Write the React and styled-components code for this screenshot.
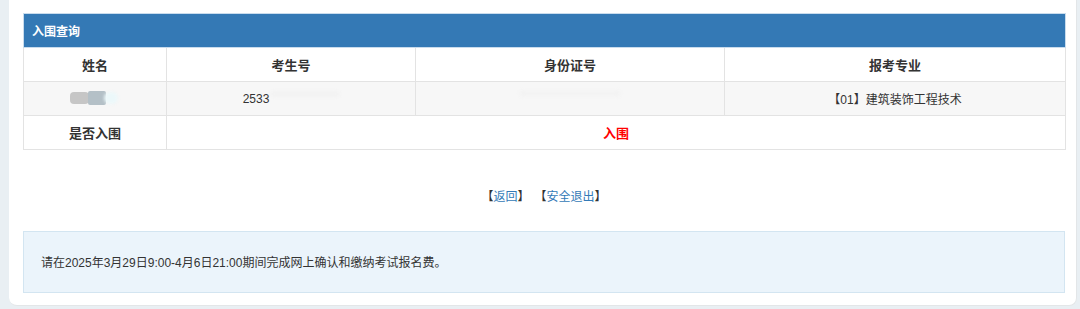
import React from 'react';
import styled, { createGlobalStyle } from 'styled-components';

const GlobalStyle = createGlobalStyle`
  html, body {
    margin: 0;
    padding: 0;
    background: #e9eff3;
  }
  body {
    font-family: "Liberation Sans", "Noto Sans CJK SC", sans-serif;
    color: #333;
  }
`;

const Page = styled.div`
  width: 1080px;
  height: 309px;
  box-sizing: border-box;
  padding: 0 3px 4px 9px;
  overflow: hidden;
`;

const Card = styled.div`
  background: #fff;
  border-right: 1px solid #e3e6e8;
  border-bottom: 1px solid #e3e6e8;
  border-radius: 0 0 8px 8px;
  padding: 13px 11px 12px 14px;
`;

const Panel = styled.table`
  width: 1042px;
  border-collapse: collapse;
  table-layout: fixed;
  font-size: 13px;
`;

const Caption = styled.th`
  background: #3479b5;
  color: #fff;
  text-align: left;
  font-size: 12px;
  font-weight: bold;
  height: 33px;
  padding: 0 8px;
  border: 1px solid #c9dced;
`;

const Cell = styled.td`
  height: 33px;
  padding: 0 8px;
  border: 1px solid #e3e3e3;
  text-align: center;
  font-weight: ${(p) => (p.$head ? 'bold' : 'normal')};
  color: ${(p) => (p.$red ? '#ff0000' : '#333')};
  font-size: ${(p) => (p.$head ? '13px' : '12px')};
`;

const Row = styled.tr`
  background: ${(p) => (p.$shade ? '#f7f7f7' : '#fff')};
`;

const Smudge = styled.span`
  display: inline-block;
  vertical-align: middle;
  width: ${(p) => p.$w}px;
  height: ${(p) => p.$h}px;
  border-radius: ${(p) => p.$r ?? 6}px;
  background: ${(p) => p.$bg};
  filter: blur(${(p) => p.$blur}px);
`;

const NameBlur = styled.span`
  display: inline-flex;
  align-items: center;
  margin-left: -2px;
`;

const Links = styled.div`
  margin: 38px 0 25px;
  line-height: 18px;
  font-size: 12px;
  text-align: center;
  color: #333;
`;

const Gap = styled.span`
  display: inline-block;
  width: 5px;
`;

const Link = styled.a`
  color: #337ab7;
  text-decoration: none;
`;

const Notice = styled.div`
  border: 1px solid #d3e5f1;
  background: #ebf4fb;
  height: 60px;
  line-height: 62px;
  padding-left: 17px;
  font-size: 12px;
  color: #333;
`;

export default function App() {
  return (
    <>
      <GlobalStyle />
      <Page>
        <Card>
          <Panel>
            <colgroup>
              <col style={{ width: 143 }} />
              <col style={{ width: 249 }} />
              <col style={{ width: 309 }} />
              <col style={{ width: 341 }} />
            </colgroup>
            <thead>
              <tr>
                <Caption colSpan={4}>入围查询</Caption>
              </tr>
            </thead>
            <tbody>
              <Row>
                <Cell $head>姓名</Cell>
                <Cell $head>考生号</Cell>
                <Cell $head>身份证号</Cell>
                <Cell $head>报考专业</Cell>
              </Row>
              <Row $shade>
                <Cell>
                  <NameBlur>
                    <Smudge $w={19} $h={12} $r={4} $bg="#c6c6c6" $blur={0.6} />
                    <Smudge $w={18} $h={14} $r={2} $bg="#b4c0c7" $blur={0.4} style={{ marginLeft: -1 }} />
                    <Smudge $w={14} $h={12} $bg="#ecf8fa" $blur={1.5} style={{ marginLeft: -2 }} />
                  </NameBlur>
                </Cell>
                <Cell>
                  2533<Smudge $w={68} $h={4} $bg="#f0f0f0" $blur={2} style={{ marginLeft: 2, marginTop: -10 }} />
                </Cell>
                <Cell>
                  <Smudge $w={100} $h={3} $bg="#efefef" $blur={2} style={{ marginTop: -12 }} />
                </Cell>
                <Cell>【01】建筑装饰工程技术</Cell>
              </Row>
              <Row>
                <Cell $head>是否入围</Cell>
                <Cell $head $red colSpan={3}>入围</Cell>
              </Row>
            </tbody>
          </Panel>
          <Links>
            【<Link href="#">返回</Link>】<Gap />【<Link href="#">安全退出</Link>】
          </Links>
          <Notice>请在2025年3月29日9:00-4月6日21:00期间完成网上确认和缴纳考试报名费。</Notice>
        </Card>
      </Page>
    </>
  );
}
